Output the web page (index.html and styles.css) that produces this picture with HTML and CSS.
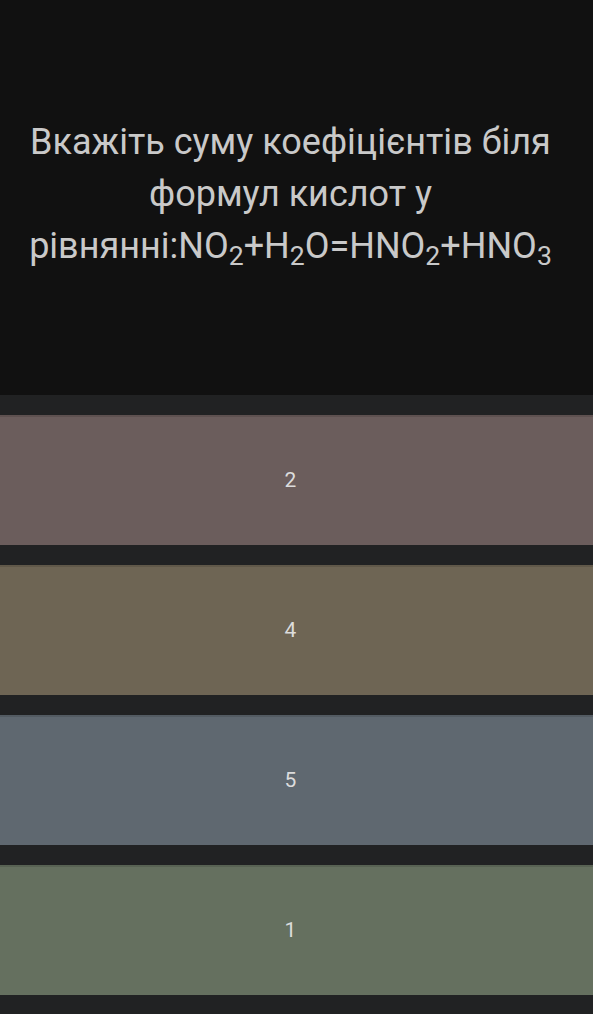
FILE: index.html
```
<!DOCTYPE html>
<html lang="uk">
<head>
<meta charset="utf-8">
<link rel="stylesheet" href="styles.css">
</head>
<body>
<div class="question">
  <p class="qtext">Вкажіть суму коефіцієнтів біля формул кислот у рівнянні:NO<sub>2</sub>+H<sub>2</sub>O=HNO<sub>2</sub>+HNO<sub>3</sub></p>
</div>
<div class="answers">
  <div class="opt o1">2</div>
  <div class="opt o2">4</div>
  <div class="opt o3">5</div>
  <div class="opt o4">1</div>
</div>
</body>
</html>
```
FILE: styles.css
```
html, body { margin: 0; padding: 0; }
body {
  width: 593px;
  height: 1014px;
  background: #212223;
  font-family: Roboto, "Noto Sans", sans-serif;
  overflow: hidden;
}
.question {
  height: 395px;
  background: #111111;
  display: flex;
  align-items: center;
  justify-content: center;
  padding: 0 22px 8px 10px;
  box-sizing: border-box;
}
.qtext {
  margin: 0;
  color: #c9c9c9;
  font-size: 36px;
  line-height: 52px;
  text-align: center;
}
.qtext sub {
  font-size: 0.74em;
  vertical-align: -7px;
  line-height: 0;
}
.answers {
  display: flex;
  flex-direction: column;
  gap: 20px;
  padding: 20px 0 19px;
}
.opt {
  height: 130px;
  display: flex;
  align-items: center;
  justify-content: center;
  padding-right: 12px;
  color: #dcdcdc;
  font-size: 21px;
  box-shadow: inset 0 2px 0 rgba(0,0,0,0.12);
}
.o1 { background: #6b5d5c; }
.o2 { background: #6e6554; }
.o3 { background: #5f6870; }
.o4 { background: #65705f; }
```
